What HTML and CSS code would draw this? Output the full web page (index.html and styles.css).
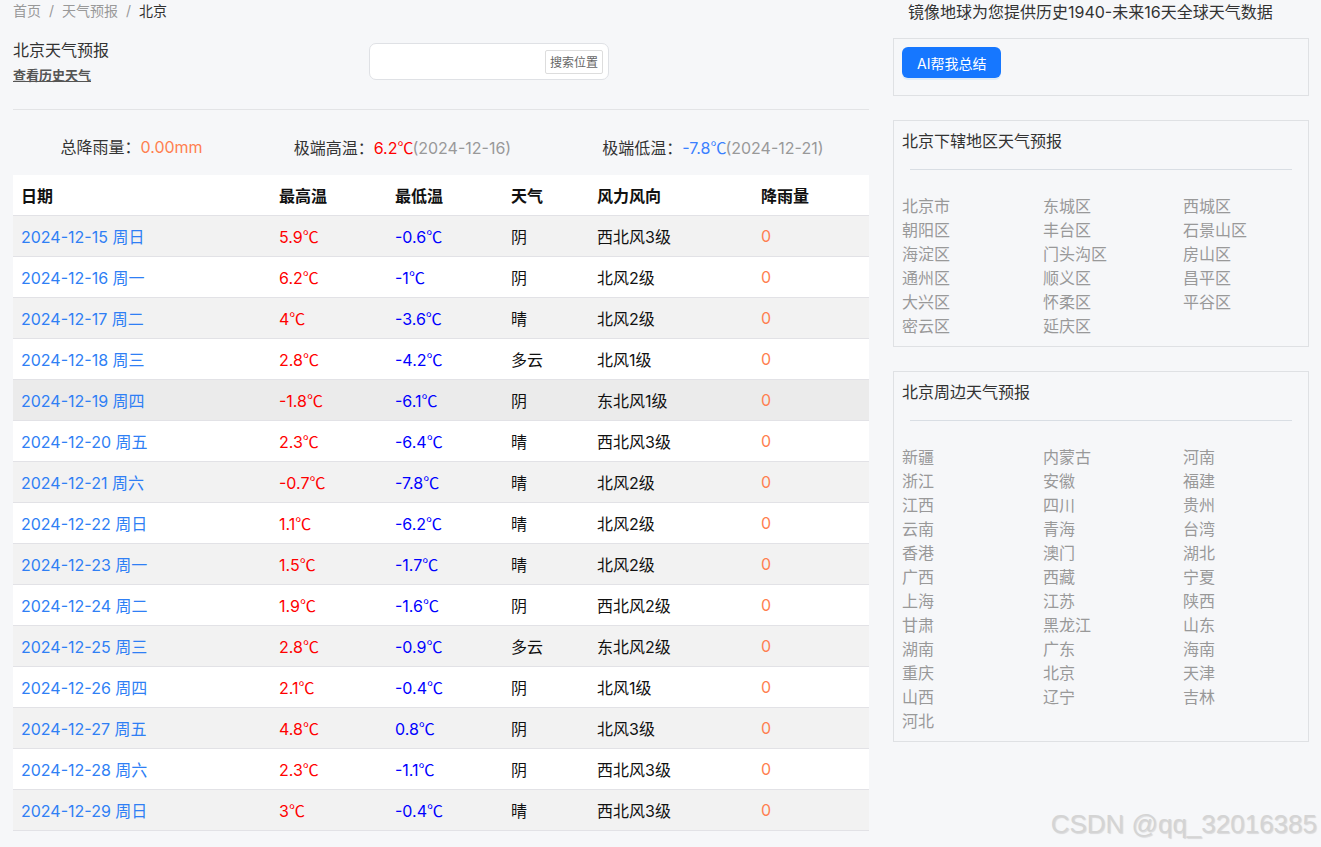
FILE: index.html
```html
<!DOCTYPE html>
<html lang="zh-CN">
<head>
<meta charset="utf-8">
<title>北京天气预报</title>
<link rel="stylesheet" href="styles.css">
</head>
<body>
<div class="page">
  <main class="main">
    <nav class="crumbs"><a href="#">首页</a><span class="sep">/</span><a href="#">天气预报</a><span class="sep">/</span><span class="cur">北京</span></nav>
    <header class="head">
      <div class="title-block">
        <h1 class="title">北京天气预报</h1>
        <a class="history" href="#">查看历史天气</a>
      </div>
      <div class="search"><input class="search-input" type="text"><button class="search-btn">搜索位置</button></div>
    </header>
    <div class="stats">
      <div class="stat">总降雨量：<span class="v-rain">0.00mm</span></div>
      <div class="stat">极端高温：<span class="v-high">6.2<span class="deg">℃</span></span><span class="v-date">(2024-12-16)</span></div>
      <div class="stat">极端低温：<span class="v-low">-7.8<span class="deg">℃</span></span><span class="v-date">(2024-12-21)</span></div>
    </div>
    <table class="tbl">
      <colgroup><col class="c1"><col class="c2"><col class="c3"><col class="c4"><col class="c5"><col class="c6"></colgroup>
      <thead><tr><th>日期</th><th>最高温</th><th>最低温</th><th>天气</th><th>风力风向</th><th>降雨量</th></tr></thead>
      <tbody>
        <tr><td class="d">2024-12-15 周日</td><td class="h">5.9<span class="deg">℃</span></td><td class="l">-0.6<span class="deg">℃</span></td><td>阴</td><td>西北风3级</td><td class="r">0</td></tr>
        <tr><td class="d">2024-12-16 周一</td><td class="h">6.2<span class="deg">℃</span></td><td class="l">-1<span class="deg">℃</span></td><td>阴</td><td>北风2级</td><td class="r">0</td></tr>
        <tr><td class="d">2024-12-17 周二</td><td class="h">4<span class="deg">℃</span></td><td class="l">-3.6<span class="deg">℃</span></td><td>晴</td><td>北风2级</td><td class="r">0</td></tr>
        <tr><td class="d">2024-12-18 周三</td><td class="h">2.8<span class="deg">℃</span></td><td class="l">-4.2<span class="deg">℃</span></td><td>多云</td><td>北风1级</td><td class="r">0</td></tr>
        <tr class="hover"><td class="d">2024-12-19 周四</td><td class="h">-1.8<span class="deg">℃</span></td><td class="l">-6.1<span class="deg">℃</span></td><td>阴</td><td>东北风1级</td><td class="r">0</td></tr>
        <tr><td class="d">2024-12-20 周五</td><td class="h">2.3<span class="deg">℃</span></td><td class="l">-6.4<span class="deg">℃</span></td><td>晴</td><td>西北风3级</td><td class="r">0</td></tr>
        <tr><td class="d">2024-12-21 周六</td><td class="h">-0.7<span class="deg">℃</span></td><td class="l">-7.8<span class="deg">℃</span></td><td>晴</td><td>北风2级</td><td class="r">0</td></tr>
        <tr><td class="d">2024-12-22 周日</td><td class="h">1.1<span class="deg">℃</span></td><td class="l">-6.2<span class="deg">℃</span></td><td>晴</td><td>北风2级</td><td class="r">0</td></tr>
        <tr><td class="d">2024-12-23 周一</td><td class="h">1.5<span class="deg">℃</span></td><td class="l">-1.7<span class="deg">℃</span></td><td>晴</td><td>北风2级</td><td class="r">0</td></tr>
        <tr><td class="d">2024-12-24 周二</td><td class="h">1.9<span class="deg">℃</span></td><td class="l">-1.6<span class="deg">℃</span></td><td>阴</td><td>西北风2级</td><td class="r">0</td></tr>
        <tr><td class="d">2024-12-25 周三</td><td class="h">2.8<span class="deg">℃</span></td><td class="l">-0.9<span class="deg">℃</span></td><td>多云</td><td>东北风2级</td><td class="r">0</td></tr>
        <tr><td class="d">2024-12-26 周四</td><td class="h">2.1<span class="deg">℃</span></td><td class="l">-0.4<span class="deg">℃</span></td><td>阴</td><td>北风1级</td><td class="r">0</td></tr>
        <tr><td class="d">2024-12-27 周五</td><td class="h">4.8<span class="deg">℃</span></td><td class="l">0.8<span class="deg">℃</span></td><td>阴</td><td>北风3级</td><td class="r">0</td></tr>
        <tr><td class="d">2024-12-28 周六</td><td class="h">2.3<span class="deg">℃</span></td><td class="l">-1.1<span class="deg">℃</span></td><td>阴</td><td>西北风3级</td><td class="r">0</td></tr>
        <tr><td class="d">2024-12-29 周日</td><td class="h">3<span class="deg">℃</span></td><td class="l">-0.4<span class="deg">℃</span></td><td>晴</td><td>西北风3级</td><td class="r">0</td></tr>
      </tbody>
    </table>
  </main>
  <aside class="side">
    <div class="side-title">镜像地球为您提供历史1940-未来16天全球天气数据</div>
    <div class="box box-ai"><button class="ai-btn">AI帮我总结</button></div>
    <div class="box">
      <div class="box-title">北京下辖地区天气预报</div>
      <div class="box-rule"></div>
      <ul class="links">
        <li>北京市</li><li>东城区</li><li>西城区</li>
        <li>朝阳区</li><li>丰台区</li><li>石景山区</li>
        <li>海淀区</li><li>门头沟区</li><li>房山区</li>
        <li>通州区</li><li>顺义区</li><li>昌平区</li>
        <li>大兴区</li><li>怀柔区</li><li>平谷区</li>
        <li>密云区</li><li>延庆区</li>
      </ul>
    </div>
    <div class="box">
      <div class="box-title">北京周边天气预报</div>
      <div class="box-rule"></div>
      <ul class="links">
        <li>新疆</li><li>内蒙古</li><li>河南</li>
        <li>浙江</li><li>安徽</li><li>福建</li>
        <li>江西</li><li>四川</li><li>贵州</li>
        <li>云南</li><li>青海</li><li>台湾</li>
        <li>香港</li><li>澳门</li><li>湖北</li>
        <li>广西</li><li>西藏</li><li>宁夏</li>
        <li>上海</li><li>江苏</li><li>陕西</li>
        <li>甘肃</li><li>黑龙江</li><li>山东</li>
        <li>湖南</li><li>广东</li><li>海南</li>
        <li>重庆</li><li>北京</li><li>天津</li>
        <li>山西</li><li>辽宁</li><li>吉林</li>
        <li>河北</li>
      </ul>
    </div>
  </aside>
</div>
<div class="watermark">CSDN @qq_32016385</div>
</body>
</html>
```
FILE: styles.css
```css
html, body {
  margin: 0;
  padding: 0;
}
body {
  background: #f6f7f9;
  font-family: Inter, "Noto Sans CJK SC", sans-serif;
  color: #333;
  height: 847px;
  overflow: hidden;
}
a { text-decoration: none; color: inherit; }
.deg {
  font-family: "Noto Sans CJK SC", sans-serif;
  letter-spacing: -1px;
}
.page {
  display: flex;
  gap: 24px;
  padding: 0 0 0 13px;
}
.main {
  width: 856px;
  flex: none;
}
.crumbs {
  font-size: 14px;
  line-height: 22px;
  color: #999;
}
.crumbs .sep { margin: 0 8px; }
.crumbs .cur { color: #333; }
.head {
  display: flex;
  align-items: flex-start;
  padding-top: 16px;
  height: 71px;
  border-bottom: 1px solid #e3e4e6;
}
.title-block {
  width: 356px;
  flex: none;
}
.title {
  margin: 0;
  font-size: 16px;
  font-weight: normal;
  line-height: 24px;
  color: #333;
}
.history {
  display: block;
  font-size: 13px;
  line-height: 22px;
  margin-top: 2px;
  color: #555;
  font-weight: 600;
  text-decoration: underline;
}
.search {
  margin-top: 5px;
  width: 240px;
  height: 37px;
  box-sizing: border-box;
  background: #fff;
  border: 1px solid #dfe1e5;
  border-radius: 7px;
  display: flex;
  align-items: center;
  padding: 0 5px 0 8px;
}
.search-input {
  flex: 1;
  min-width: 0;
  border: 0;
  outline: 0;
  background: transparent;
}
.search-btn {
  font-family: inherit;
  font-size: 12px;
  color: #666;
  background: #fff;
  border: 1px solid #ddd;
  border-radius: 2px;
  padding: 0 4px;
  height: 24px;
}
.stats {
  display: flex;
  justify-content: space-around;
  font-size: 16px;
  line-height: 22px;
  padding: 26px 0 16px 2px;
  color: #333;
}
.v-rain { color: #ff7f50; }
.v-high { color: #ff0000; }
.v-low { color: #3a80ff; }
.v-date { color: #999; }
.tbl {
  width: 856px;
  table-layout: fixed;
  border-collapse: collapse;
  font-size: 16px;
}
.c1 { width: 258px; }
.c2 { width: 116px; }
.c3 { width: 116px; }
.c4 { width: 86px; }
.c5 { width: 164px; }
.c6 { width: 116px; }
.tbl th, .tbl td {
  text-align: left;
  padding: 0 8px;
  height: 40px;
  border-bottom: 1px solid #e2e2e6;
  white-space: nowrap;
}
.tbl th {
  font-weight: 700;
  color: #111;
  background: #fff;
}
.tbl td { color: #111; }
.tbl tbody tr:nth-child(odd) { background: #f2f2f2; }
.tbl tbody tr:nth-child(even) { background: #fff; }
.tbl tbody tr.hover { background: #ebebeb; }
.tbl td.d { color: #2f7ff5; }
.tbl td.h { color: #ff0000; }
.tbl td.l { color: #0000ff; }
.tbl td.r { color: #ff7f50; }
.side {
  width: 416px;
  flex: none;
}
.side-title {
  font-size: 16px;
  line-height: 24px;
  padding-left: 15px;
  color: #333;
  height: 38px;
}
.box {
  border: 1px solid #dfe1e4;
  padding: 8px;
  margin-bottom: 24px;
}
.box-ai { padding-bottom: 17px; }
.ai-btn {
  font-family: inherit;
  background: #1677ff;
  color: #fff;
  border: 0;
  border-radius: 6px;
  font-size: 14px;
  height: 31px;
  padding: 0 15px;
  box-shadow: 0 2px 0 rgba(5, 145, 255, 0.1);
}
.box-title {
  font-size: 16px;
  line-height: 24px;
  color: #333;
}
.box-rule {
  margin: 16px 8px 24px;
  border-top: 1px solid #d9dee4;
}
.links {
  list-style: none;
  margin: 0;
  padding: 0;
  display: grid;
  grid-template-columns: 141px 140px 1fr;
  font-size: 16px;
  line-height: 24px;
  color: #999;
}
.watermark {
  position: absolute;
  right: 4px;
  top: 808px;
  font-family: "Liberation Sans", Arial, sans-serif;
  font-size: 26px;
  line-height: 32px;
  color: #d4d4d4;
  text-shadow: 1px 1px 1px rgba(0,0,0,0.12);
}
```
